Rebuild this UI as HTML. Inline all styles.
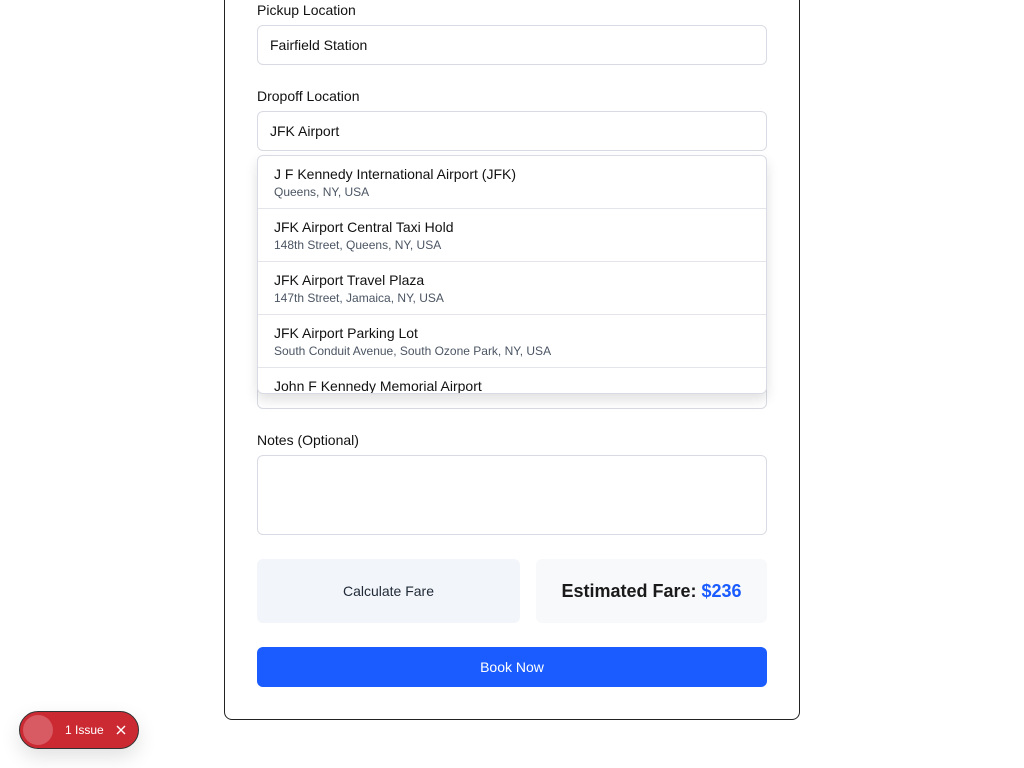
<!DOCTYPE html>
<html><head><style>
body{margin:0;width:1024px;height:768px;background:#fff;font-family:"Liberation Sans",sans-serif;position:relative;overflow:hidden;color:#111}
.card{position:absolute;left:224px;top:-20px;width:574px;height:738px;border:1px solid #222;border-radius:8px}
.lbl{position:absolute;left:257px;font-size:14px;color:#111}
.inp{position:absolute;left:257px;width:508px;border:1px solid #d8dbe3;border-radius:6px;box-sizing:border-box;font-size:14px;padding-left:12px;line-height:38px}
.dd{position:absolute;left:257px;top:155px;width:510px;height:239px;box-sizing:border-box;border:1px solid #d8dbe3;border-radius:6px;background:#fff;box-shadow:0 6px 12px rgba(0,0,0,.12);overflow:hidden}
.it{height:53px;border-bottom:1px solid #e3e5ea;padding-left:16px;box-sizing:border-box;padding-top:10px}
.it .a{font-size:14px}
.it .b{font-size:12px;color:#4b5563;margin-top:3px}
</style></head><body>
<div class="card"></div>
<div class="lbl" style="top:2px">Pickup Location</div>
<div class="inp" style="top:25px;height:40px;width:510px">Fairfield Station</div>
<div class="lbl" style="top:88px">Dropoff Location</div>
<div class="inp" style="top:111px;height:40px;width:510px">JFK Airport</div>
<div class="inp" style="top:370px;height:39px;width:510px"></div>
<div class="dd">
<div class="it"><div class="a">J F Kennedy International Airport (JFK)</div><div class="b">Queens, NY, USA</div></div>
<div class="it"><div class="a">JFK Airport Central Taxi Hold</div><div class="b">148th Street, Queens, NY, USA</div></div>
<div class="it"><div class="a">JFK Airport Travel Plaza</div><div class="b">147th Street, Jamaica, NY, USA</div></div>
<div class="it"><div class="a">JFK Airport Parking Lot</div><div class="b">South Conduit Avenue, South Ozone Park, NY, USA</div></div>
<div class="it"><div class="a">John F Kennedy Memorial Airport</div></div>
</div>
<div class="lbl" style="top:432px">Notes (Optional)</div>
<div class="inp" style="top:455px;height:80px;width:510px"></div>
<div style="position:absolute;left:257px;top:559px;width:263px;height:64px;background:#f2f5f9;border-radius:6px;text-align:center;line-height:64px;font-size:14px;color:#1f2937">Calculate Fare</div>
<div style="position:absolute;left:536px;top:559px;width:231px;height:64px;background:#f8f9fb;border-radius:6px;text-align:center;line-height:64px;font-size:18px;font-weight:bold;color:#1a1a1a">Estimated Fare: <span style="color:#1a5cff">$236</span></div>
<div style="position:absolute;left:257px;top:647px;width:510px;height:40px;background:#1a5cff;border-radius:6px;text-align:center;line-height:40px;font-size:14px;color:#fff">Book Now</div>
<div style="position:absolute;left:19px;top:711px;width:118px;height:36px;background:#cc2a33;border:1px solid #333;border-radius:19px;box-shadow:0 8px 20px rgba(0,0,0,.12)">
<div style="position:absolute;left:3px;top:3px;width:30px;height:30px;border-radius:50%;background:#d85a62"></div>
<div style="position:absolute;left:45px;top:0;line-height:36px;color:#fff;font-size:12px">1 Issue</div>
<svg style="position:absolute;left:96px;top:13px" width="10" height="10" viewBox="0 0 10 10"><path d="M1 1L9 9M9 1L1 9" stroke="#fff" stroke-width="1.4"/></svg>
</div>
</body></html>
